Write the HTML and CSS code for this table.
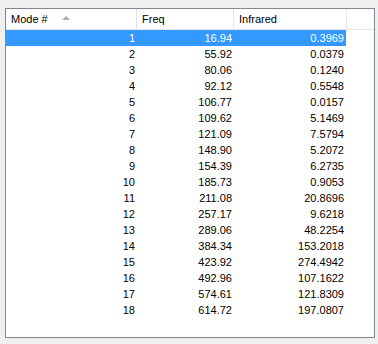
FILE: index.html
```
<!DOCTYPE html>
<html>
<head>
<meta charset="utf-8">
<link rel="stylesheet" href="styles.css">
</head>
<body>
<div class="list">
  <div class="header">
    <div class="hcell first">Mode #<span class="arrow"></span></div>
    <div class="hcell">Freq</div>
    <div class="hcell">Infrared</div>
    <div class="hcell filler"></div>
  </div>
  <div class="rows">
    <div class="row sel"><span>1</span><span>16.94</span><span>0.3969</span></div>
    <div class="row"><span>2</span><span>55.92</span><span>0.0379</span></div>
    <div class="row"><span>3</span><span>80.06</span><span>0.1240</span></div>
    <div class="row"><span>4</span><span>92.12</span><span>0.5548</span></div>
    <div class="row"><span>5</span><span>106.77</span><span>0.0157</span></div>
    <div class="row"><span>6</span><span>109.62</span><span>5.1469</span></div>
    <div class="row"><span>7</span><span>121.09</span><span>7.5794</span></div>
    <div class="row"><span>8</span><span>148.90</span><span>5.2072</span></div>
    <div class="row"><span>9</span><span>154.39</span><span>6.2735</span></div>
    <div class="row"><span>10</span><span>185.73</span><span>0.9053</span></div>
    <div class="row"><span>11</span><span>211.08</span><span>20.8696</span></div>
    <div class="row"><span>12</span><span>257.17</span><span>9.6218</span></div>
    <div class="row"><span>13</span><span>289.06</span><span>48.2254</span></div>
    <div class="row"><span>14</span><span>384.34</span><span>153.2018</span></div>
    <div class="row"><span>15</span><span>423.92</span><span>274.4942</span></div>
    <div class="row"><span>16</span><span>492.96</span><span>107.1622</span></div>
    <div class="row"><span>17</span><span>574.61</span><span>121.8309</span></div>
    <div class="row"><span>18</span><span>614.72</span><span>197.0807</span></div>
  </div>
</div>
</body>
</html>
```
FILE: styles.css
```
html, body {
  margin: 0;
  padding: 0;
  background: #f0f0f0;
}
body {
  padding: 8px 4px 0 5px;
  font-family: "Liberation Sans", Arial, sans-serif;
  font-size: 11px;
  color: #000;
}
.list {
  box-sizing: border-box;
  width: 370px;
  height: 330px;
  border: 1px solid #828790;
  background: #fff;
}
.header {
  display: grid;
  grid-template-columns: 131px 97px 113px 1fr;
  height: 20px;
  border-bottom: 1px solid #e5e5e5;
  box-sizing: content-box;
}
.hcell {
  position: relative;
  border-right: 1px solid #e5e5e5;
  padding-left: 5px;
  line-height: 20px;
  white-space: nowrap;
}
.hcell.filler {
  border-right: none;
}
.arrow {
  position: absolute;
  left: 56px;
  top: 7px;
  width: 0;
  height: 0;
  border-left: 4px solid transparent;
  border-right: 4px solid transparent;
  border-bottom: 4px solid #a7adb5;
}
.rows {
  display: flex;
  flex-direction: column;
}
.row {
  display: grid;
  grid-template-columns: 131px 97px 112px;
  height: 16px;
  line-height: 16px;
  width: 340px;
}
.row span {
  text-align: right;
  padding-right: 2px;
}
.row.sel {
  background: #3399ff;
  color: #fff;
}
```
